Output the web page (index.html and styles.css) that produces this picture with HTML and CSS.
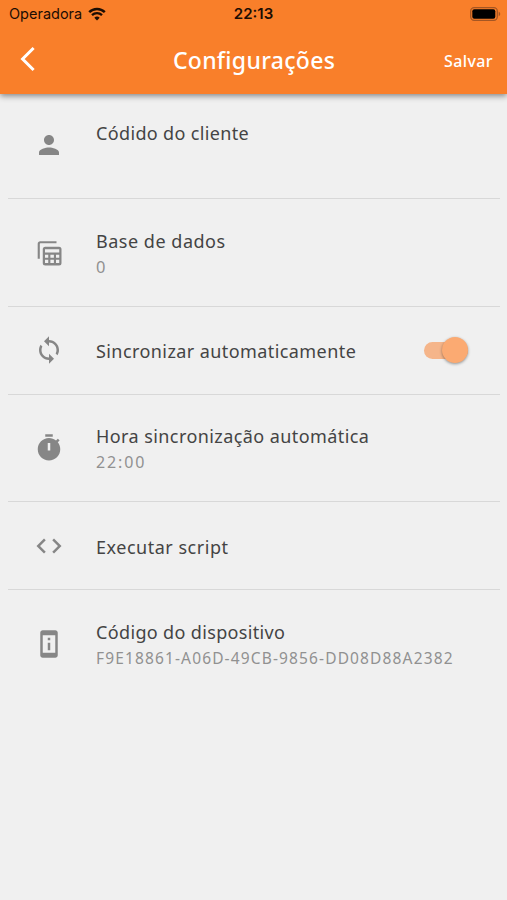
FILE: index.html
```html
<!DOCTYPE html>
<html lang="pt-BR">
<head>
    <meta charset="UTF-8">
    <meta name="viewport" content="width=device-width, initial-scale=1.0">
    <title>Configurações</title>
    <link rel="stylesheet" href="styles.css">
</head>
<body>

<header class="header">
    <div class="status-bar">
        <div class="carrier">
            <span class="carrier-name">Operadora</span>
            <svg class="wifi" viewBox="0 0 18 14" width="18" height="14">
                <path d="M1.2 5.2a11.2 11.2 0 0 1 15.6 0" fill="none" stroke="#1c0d03" stroke-width="2.5"/>
                <path d="M4 8.2a7.2 7.2 0 0 1 10 0" fill="none" stroke="#1c0d03" stroke-width="2.3"/>
                <path d="M9 13.6l-2.7-2.8a3.9 3.9 0 0 1 5.4 0z" fill="#1c0d03"/>
            </svg>
        </div>
        <span class="clock">22:13</span>
        <svg class="battery" viewBox="0 0 31 14" width="31" height="14">
            <rect x="0.7" y="0.7" width="26.6" height="12.6" rx="3.5" fill="none" stroke="#a55623" stroke-width="1.3"/>
            <rect x="2.3" y="2.3" width="23" height="9.4" rx="2" fill="#000"/>
            <path d="M28.7 4.8c2 .7 2 3.7 0 4.4z" fill="#a55623"/>
        </svg>
    </div>
    <div class="nav-bar">
        <svg class="back" viewBox="0 0 16 26" width="16" height="26">
            <path d="M13.6 2L2.6 13l11 11" fill="none" stroke="#fff" stroke-width="3"/>
        </svg>
        <h1 class="title">Configurações</h1>
        <span class="save">Salvar</span>
    </div>
</header>

<main class="list">
    <div class="row">
        <svg class="icon" viewBox="0 0 24 24"><path d="M12 12c2.21 0 4-1.79 4-4s-1.79-4-4-4-4 1.79-4 4 1.79 4 4 4zm0 2c-2.67 0-8 1.34-8 4v2h16v-2c0-2.66-5.33-4-8-4z"/></svg>
        <div class="text">
            <div class="label client">Códido do cliente</div>
            <div class="value">&nbsp;</div>
        </div>
    </div>
    <div class="row">
        <svg class="icon" viewBox="0 0 24 24">
            <path d="M3.8 16.5V4.6c0-.7.5-1.2 1.2-1.2h13" fill="none" stroke="#868686" stroke-width="1.7"/>
            <path fill-rule="evenodd" d="M9 7h11a2 2 0 0 1 2 2v11a2 2 0 0 1-2 2H9a2 2 0 0 1-2-2V9a2 2 0 0 1 2-2zM8.8 9v2.6h11.4V9zM8.8 13.3v2.4h2.6v-2.4zM13.1 13.3v2.4h2.8v-2.4zM17.6 13.3v2.4h2.6v-2.4zM8.8 17.4V20h2.6v-2.6zM13.1 17.4V20h2.8v-2.6zM17.6 17.4V20h2.6v-2.6z"/>
        </svg>
        <div class="text">
            <div class="label base">Base de dados</div>
            <div class="value zero">0</div>
        </div>
    </div>
    <div class="row single">
        <svg class="icon" viewBox="0 0 24 24"><path d="M12 4V1L8 5l4 4V6c3.31 0 6 2.69 6 6 0 1.01-.25 1.97-.7 2.8l1.46 1.46C19.54 15.03 20 13.57 20 12c0-4.42-3.58-8-8-8zm0 14c-3.31 0-6-2.69-6-6 0-1.01.25-1.97.7-2.8L5.24 7.74C4.46 8.97 4 10.43 4 12c0 4.42 3.58 8 8 8v3l4-4-4-4v3z"/></svg>
        <div class="text">
            <div class="label sync">Sincronizar automaticamente</div>
        </div>
        <div class="switch"><div class="knob"></div></div>
    </div>
    <div class="row">
        <svg class="icon" viewBox="0 0 24 24"><path fill-rule="evenodd" d="M15 1H9v2h6V1zm4.030 6.390l1.420-1.420c-.43-.51-.9-.99-1.410-1.410l-1.420 1.420C16.070 4.740 14.120 4 12 4c-4.970 0-9 4.030-9 9s4.020 9 9 9 9-4.030 9-9c0-2.120-.74-4.070-1.970-5.610zM13 14h-2V8h2v6z"/></svg>
        <div class="text">
            <div class="label hour">Hora sincronização automática</div>
            <div class="value time">22:00</div>
        </div>
    </div>
    <div class="row single">
        <svg class="icon" viewBox="0 0 24 24"><path d="M9.4 16.6L4.8 12l4.600-4.600L8 6l-6 6 6 6 1.400-1.400zm5.200 0l4.600-4.600-4.600-4.600L16 6l6 6-6 6-1.400-1.400z"/></svg>
        <div class="text">
            <div class="label script">Executar script</div>
        </div>
    </div>
    <div class="row last">
        <svg class="icon" viewBox="0 0 24 24"><path d="M13 7h-2v2h2V7zm0 4h-2v6h2v-6zm4-9.990L7 1c-1.100 0-2 .9-2 2v18c0 1.100.9 2 2 2h10c1.100 0 2-.9 2-2V3c0-1.100-.9-1.990-2-1.990zM17 19H7V5h10v14z"/></svg>
        <div class="text">
            <div class="label device">Código do dispositivo</div>
            <div class="value uuid">F9E18861-A06D-49CB-9856-DD08D88A2382</div>
        </div>
    </div>
</main>

</body>
</html>
```
FILE: styles.css
```css
* {
    box-sizing: border-box;
}
body {
    margin: 0;
    min-height: 100vh;
    background-color: #f0f0f0;
    font-family: "Noto Sans", sans-serif;
}
.header {
    position: relative;
    z-index: 1;
    height: 94px;
    background-color: #f97f2a;
    box-shadow: 0 2px 6px rgba(0, 0, 0, 0.45);
}
.status-bar {
    display: grid;
    grid-template-columns: 1fr auto 1fr;
    align-items: center;
    height: 27px;
    padding: 0 6px 0 9px;
    font-family: Inter, sans-serif;
    color: #1c0d03;
}
.carrier {
    display: flex;
    align-items: center;
    gap: 6px;
}
.carrier-name {
    font-size: 14.5px;
}
.clock {
    margin-right: 3px;
    font-size: 15px;
    font-weight: 600;
}
.battery {
    justify-self: end;
}
.nav-bar {
    display: grid;
    grid-template-columns: 1fr auto 1fr;
    align-items: center;
    height: 67px;
    padding: 0 14px 0 20px;
    color: #fff;
}
.back {
    margin-top: -3px;
}
.title {
    margin: 0 5px 2px 0;
    font-size: 23px;
    font-weight: 500;
    letter-spacing: 0.3px;
}
.save {
    justify-self: end;
    font-size: 16px;
    font-weight: 500;
    letter-spacing: 0.4px;
}
.list {
    margin-top: -2.4px;
    padding: 0 7px 0 8px;
}
.row {
    display: flex;
    align-items: center;
    height: 107.6px;
    padding: 0 32px 0 26px;
    border-bottom: 1px solid #d8d8d8;
}
.row.single {
    height: 87.8px;
}
.row.last {
    border-bottom: none;
}
.icon {
    flex: none;
    width: 30px;
    height: 30px;
    margin-right: 32px;
    fill: #868686;
}
.text {
    flex: 1;
    padding-top: 2px;
    white-space: nowrap;
}
.label {
    font-size: 18px;
    line-height: 26px;
    letter-spacing: 0.42px;
    color: #444;
}
.client,
.device {
    letter-spacing: 0.35px;
}
.base,
.script {
    letter-spacing: 0.52px;
}
.value {
    font-size: 15.5px;
    line-height: 26px;
    color: #919191;
}
.zero {
    font-size: 16.5px;
}
.time {
    font-size: 16px;
    letter-spacing: 1.9px;
}
.uuid {
    letter-spacing: 1.14px;
}
.switch {
    display: flex;
    align-items: center;
    justify-content: flex-end;
    width: 44px;
    height: 17px;
    border-radius: 9px;
    background-color: #f5b58a;
}
.knob {
    flex: none;
    width: 26px;
    height: 26px;
    border-radius: 50%;
    background-color: #fbaa72;
    box-shadow: 0 1px 3px rgba(0, 0, 0, 0.4);
}
```
